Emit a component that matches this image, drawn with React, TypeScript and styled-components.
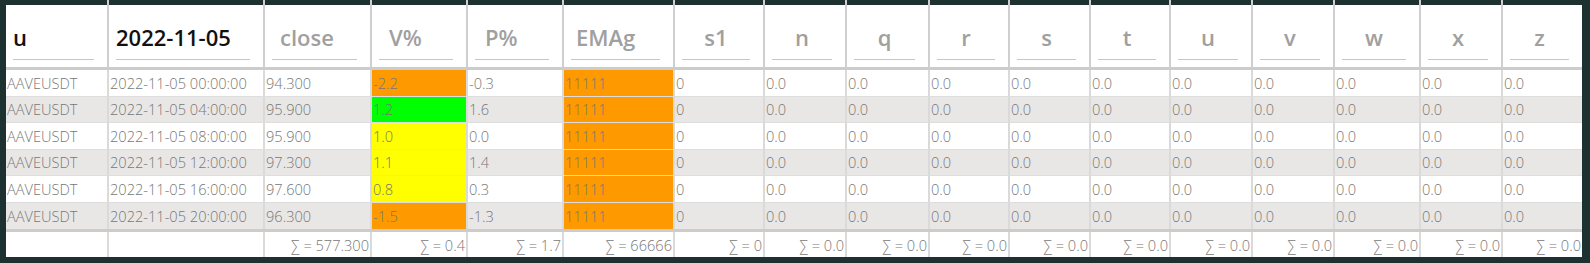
import React from "react";
import styled, { createGlobalStyle } from "styled-components";

const DARK = "#1d3131";

const GlobalStyle = createGlobalStyle`
  html, body { margin: 0; padding: 0; background: ${DARK}; }
  body { font-family: "Open Sans", "Noto Sans", "DejaVu Sans", sans-serif; }
`;

type Col = {
  key: string;
  width: number;
  value?: string;
  placeholder?: string;
  indent?: number;
  center?: boolean;
};

const columns: Col[] = [
  { key: "u", width: 101, value: "u" },
  { key: "date", width: 156, value: "2022-11-05" },
  { key: "close", width: 107, placeholder: "close", indent: 8 },
  { key: "v", width: 96, placeholder: "V%", indent: 10 },
  { key: "p", width: 96, placeholder: "P%", indent: 10 },
  { key: "ema", width: 111, placeholder: "EMAg", indent: 5 },
  { key: "s1", width: 90, placeholder: "s1", center: true },
  { key: "n", width: 82, placeholder: "n", center: true },
  { key: "q", width: 83, placeholder: "q", center: true },
  { key: "r", width: 80, placeholder: "r", center: true },
  { key: "s", width: 81, placeholder: "s", center: true },
  { key: "t", width: 80, placeholder: "t", center: true },
  { key: "u2", width: 82, placeholder: "u", center: true },
  { key: "vv", width: 82, placeholder: "v", center: true },
  { key: "w", width: 86, placeholder: "w", center: true },
  { key: "x", width: 82, placeholder: "x", center: true },
  { key: "z", width: 81, placeholder: "z", center: true },
];

const template = columns.map((c) => `${c.width}px`).join(" ");

const ORANGE = "#ff9900";
const GREEN = "#00ff00";
const YELLOW = "#ffff00";

type Row = { time: string; close: string; v: string; vc: string; p: string };

const rows: Row[] = [
  { time: "00:00:00", close: "94.300", v: "-2.2", vc: ORANGE, p: "-0.3" },
  { time: "04:00:00", close: "95.900", v: "1.2", vc: GREEN, p: "1.6" },
  { time: "08:00:00", close: "95.900", v: "1.0", vc: YELLOW, p: "0.0" },
  { time: "12:00:00", close: "97.300", v: "1.1", vc: YELLOW, p: "1.4" },
  { time: "16:00:00", close: "97.600", v: "0.8", vc: YELLOW, p: "0.3" },
  { time: "20:00:00", close: "96.300", v: "-1.5", vc: ORANGE, p: "-1.3" },
];

const sums = [
  "",
  "",
  "∑ = 577.300",
  "∑ = 0.4",
  "∑ = 1.7",
  "∑ = 66666",
  "∑ = 0",
  ...Array(10).fill("∑ = 0.0"),
];

const Frame = styled.div`
  width: 1590px;
  box-sizing: border-box;
  padding: 0 8px 6px 6px;
  background: ${DARK};
`;

const Sheet = styled.div`
  width: 1576px;
  overflow: hidden;
  background: #fff;
`;

const GridRow = styled.div<{ $cols: string }>`
  display: grid;
  grid-template-columns: ${(p) => p.$cols};
`;

const HeaderRow = styled(GridRow)`
  border-bottom: 3px solid #cccccc;
`;

const HeaderCell = styled.div<{ $first: boolean }>`
  height: 67px;
  box-sizing: border-box;
  display: flex;
  align-items: flex-end;
  padding: 5px 13px 7px 7px;
  border-left: ${(p) => (p.$first ? "none" : "2px solid #cfcfcf")};
  background: linear-gradient(${DARK} 0 5px, #ffffff 5px);
`;

const HeaderInput = styled.input<{ $indent: number; $center: boolean }>`
  width: 100%;
  min-width: 0;
  height: 46px;
  box-sizing: border-box;
  margin: 0;
  border: none;
  border-bottom: 1px solid #c6c6c6;
  background: transparent;
  outline: none;
  padding: 0 0 0 ${(p) => p.$indent}px;
  text-align: ${(p) => (p.$center ? "center" : "left")};
  font-family: "Open Sans", "Noto Sans", sans-serif;
  font-weight: 600;
  font-size: 22px;
  color: #111;
  &::placeholder {
    color: #a0a0a0;
    opacity: 1;
  }
`;

const BodyRow = styled(GridRow)<{ $striped: boolean; $last: boolean }>`
  height: 26.5px;
  box-sizing: border-box;
  background: ${(p) => (p.$striped ? "#e9e7e6" : "#ffffff")};
  border-bottom: ${(p) => (p.$last ? "none" : "1px solid #dddddd")};
`;

const Cell = styled.div<{ $first: boolean; $bg?: string }>`
  display: flex;
  align-items: center;
  min-width: 0;
  overflow: hidden;
  white-space: nowrap;
  padding: 0 2px 0 1px;
  border-left: ${(p) => (p.$first ? "none" : "2px solid #dadada")};
  background: ${(p) => p.$bg ?? "transparent"};
  font-size: 14.6px;
  font-weight: 300;
  color: #777;
`;

const FooterRow = styled(GridRow)`
  height: 28px;
  box-sizing: border-box;
  border-top: 3px solid #cccccc;
  background: #fff;
`;

const SumCell = styled(Cell)`
  justify-content: flex-end;
  padding: 0 1px 0 0;
`;

export default function App() {
  return (
    <>
      <GlobalStyle />
      <Frame>
        <Sheet>
          <HeaderRow $cols={template}>
            {columns.map((c, i) => (
              <HeaderCell key={c.key} $first={i === 0}>
                <HeaderInput
                  readOnly
                  value={c.value ?? ""}
                  placeholder={c.placeholder}
                  $indent={c.indent ?? 0}
                  $center={!!c.center}
                />
              </HeaderCell>
            ))}
          </HeaderRow>
          {rows.map((r, ri) => {
            const cells: { text: string; bg?: string }[] = [
              { text: "AAVEUSDT" },
              { text: `2022-11-05 ${r.time}` },
              { text: r.close },
              { text: r.v, bg: r.vc },
              { text: r.p },
              { text: "11111", bg: ORANGE },
              { text: "0" },
              ...Array(10).fill({ text: "0.0" }),
            ];
            return (
              <BodyRow
                key={r.time}
                $cols={template}
                $striped={ri % 2 === 1}
                $last={ri === rows.length - 1}
              >
                {cells.map((c, ci) => (
                  <Cell key={ci} $first={ci === 0} $bg={c.bg}>
                    {c.text}
                  </Cell>
                ))}
              </BodyRow>
            );
          })}
          <FooterRow $cols={template}>
            {sums.map((s, i) => (
              <SumCell key={i} $first={i === 0}>
                {s}
              </SumCell>
            ))}
          </FooterRow>
        </Sheet>
      </Frame>
    </>
  );
}
